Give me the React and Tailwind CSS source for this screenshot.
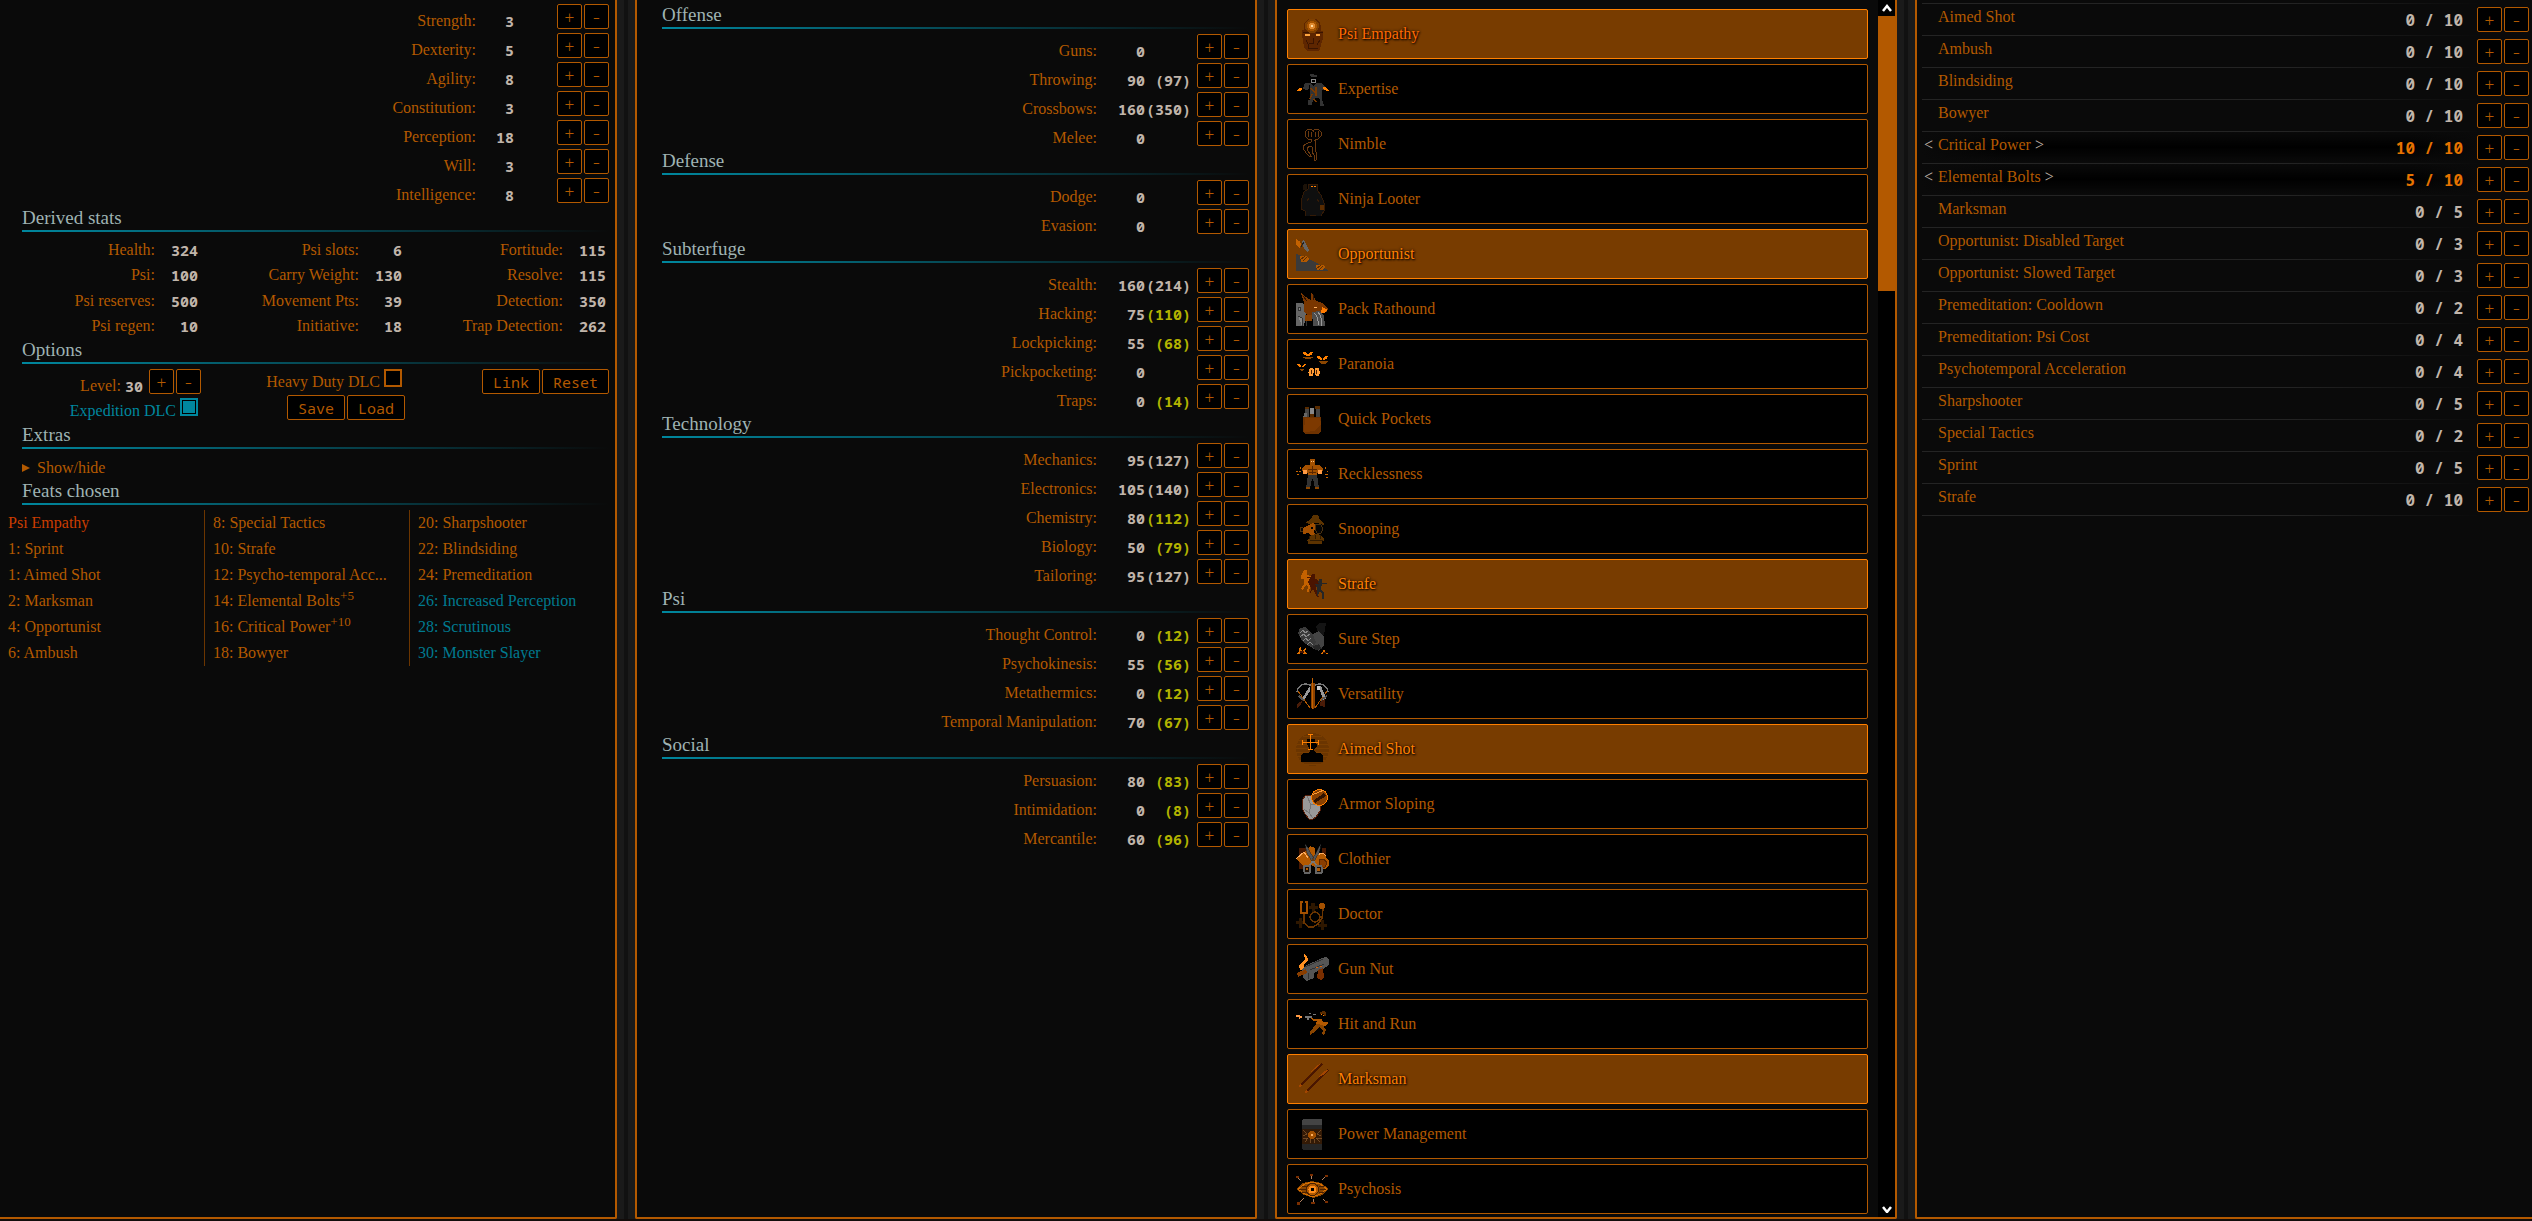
import React, { useState } from 'react';
import { clsx } from 'clsx';

const STATS = [
    ['Strength', 3],
    ['Dexterity', 5],
    ['Agility', 8],
    ['Constitution', 3],
    ['Perception', 18],
    ['Will', 3],
    ['Intelligence', 8],
];

const DERIVED = [
    ['Health', 324], ['Psi slots', 6], ['Fortitude', 115],
    ['Psi', 100], ['Carry Weight', 130], ['Resolve', 115],
    ['Psi reserves', 500], ['Movement Pts', 39], ['Detection', 350],
    ['Psi regen', 10], ['Initiative', 18], ['Trap Detection', 262],
];

// [label, base, effective, has synergy]
const SKILLS = {
    Offense: [['Guns', 0], ['Throwing', 90, 97], ['Crossbows', 160, 350], ['Melee', 0]],
    Defense: [['Dodge', 0], ['Evasion', 0]],
    Subterfuge: [
        ['Stealth', 160, 214],
        ['Hacking', 75, 110, true],
        ['Lockpicking', 55, 68, true],
        ['Pickpocketing', 0],
        ['Traps', 0, 14, true],
    ],
    Technology: [
        ['Mechanics', 95, 127],
        ['Electronics', 105, 140],
        ['Chemistry', 80, 112, true],
        ['Biology', 50, 79, true],
        ['Tailoring', 95, 127],
    ],
    Psi: [
        ['Thought Control', 0, 12, true],
        ['Psychokinesis', 55, 56, true],
        ['Metathermics', 0, 12, true],
        ['Temporal Manipulation', 70, 67, true],
    ],
    Social: [['Persuasion', 80, 83, true], ['Intimidation', 0, 8, true], ['Mercantile', 60, 96, true]],
};

const CHOSEN = [
    [
        { text: 'Psi Empathy', tone: 'psi' },
        { text: '1: Sprint' },
        { text: '1: Aimed Shot' },
        { text: '2: Marksman' },
        { text: '4: Opportunist' },
        { text: '6: Ambush' },
    ],
    [
        { text: '8: Special Tactics' },
        { text: '10: Strafe' },
        { text: '12: Psycho-temporal Acc...' },
        { text: '14: Elemental Bolts', bonus: '+5' },
        { text: '16: Critical Power', bonus: '+10' },
        { text: '18: Bowyer' },
    ],
    [
        { text: '20: Sharpshooter' },
        { text: '22: Blindsiding' },
        { text: '24: Premeditation' },
        { text: '26: Increased Perception', tone: 'veteran' },
        { text: '28: Scrutinous', tone: 'veteran' },
        { text: '30: Monster Slayer', tone: 'veteran' },
    ],
];

const SPECIALIZATIONS = [
    ['Aimed Shot', 0, 10],
    ['Ambush', 0, 10],
    ['Blindsiding', 0, 10],
    ['Bowyer', 0, 10],
    ['Critical Power', 10, 10],
    ['Elemental Bolts', 5, 10],
    ['Marksman', 0, 5],
    ['Opportunist: Disabled Target', 0, 3],
    ['Opportunist: Slowed Target', 0, 3],
    ['Premeditation: Cooldown', 0, 2],
    ['Premeditation: Psi Cost', 0, 4],
    ['Psychotemporal Acceleration', 0, 4],
    ['Sharpshooter', 0, 5],
    ['Special Tactics', 0, 2],
    ['Sprint', 0, 5],
    ['Strafe', 0, 10],
];

// Feat art, drawn on a 33x33 pixel canvas
const ART = {
    'Psi Empathy': (
        <>
            <path d="M12 1h8l4 4 1 4v4h2v8l-2 6-1 5-3 1h-10l-3-3-1-8-1-4v-6h2V6l2-3z" fill="#5e2600" />
            <circle cx="16" cy="8" r="7" fill="#804000" />
            <circle cx="16" cy="8" r="5" fill="#a85400" />
            <circle cx="16" cy="8" r="3" fill="#e08a30" />
            <rect x="15" y="7" width="2" height="2" fill="#ffd9a0" />
            <path d="M9 16h5v2H9zM20 16h4v2h-4z" fill="#ffa640" />
            <path d="M7 14h6M20 14h7M17 20v5h-4M10 22l2 4v5M24 22l-3 5M12 30h10" stroke="#3a1400" fill="none" />
        </>
    ),
    Expertise: (
        <>
            <path d="M14 1h4v1h3v2h-6zM9 10h5l3 3 3-3h5l4 3 1 3-4 1v9l2 7h-4v-7l-3-1-4 1-1 6h-4l1-9V16l-2 1-4-1z" fill="#333" />
            <path d="M15 6h5v4h-5z" fill="#888" />
            <path d="M16 7h3v2h-3zM13 12h1v15h-1z" fill="#000" />
            <path d="M0 18l3-3h3v2l-3 1zM27 14h3l3 4h-2l-3-1z" fill="#ff8000" />
            <path d="M15 15l4 5M20 14v9M16 21l-2 5M18 26l2 3" stroke="#7a3a00" strokeWidth="1.5" />
        </>
    ),
    Nimble: (
        <g fill="none" stroke="#6b3a10">
            <path d="M12 1h3l2 2 2-2h3l3 3v4l-3 3h-3M12 1L9 4v4l3 3h3M15 4v5M19 4v5M12 3v6M22 3v6M17 3v1" />
            <path d="M15 11v3l-3 1-5 3v2l3 5 3 3h2l-4-7 2-3 3 1v5l2 3v5l1 2 1-2v-8l-1-5 1-7h-2" />
        </g>
    ),
    'Ninja Looter': (
        <>
            <path d="M12 1h9v6l4 5 3 8v8l-3 5h-5l-2-1-4 1H9V28l-4-2V18l3-9 4-3z" fill="#0f0f0f" stroke="#331a06" />
            <path d="M8 1h3v6H7V3z" fill="#1c1208" />
            <path d="M11 18l2-3M23 19l-2-3" stroke="#331a06" />
            <path d="M15 3h2v1h-2zM18 3h2v1h-2z" fill="#ff8000" />
            <path d="M24 22h4v5h-4z" fill="#5a2c00" />
        </>
    ),
    Opportunist: (
        <>
            <path d="M0 16l7 2 14 7 12 8H0z" fill="#3a3a3a" />
            <path d="M0 1l2 2 1-1 2 4-1 4-4-3z" fill="#c46200" />
            <path d="M6 3l2-1 5 10-2 2-3-3z" fill="#666" />
            <path d="M5 9l3-5" stroke="#222" />
            <path d="M4 18h7l2 3-3 3H5zM20 27h7l2 2-3 3h-5z" fill="#b35900" />
            <path d="M4 22l5-4M7 23l4-4M20 31l5-4M23 32l4-4" stroke="#5a2c00" />
        </>
    ),
    'Pack Rathound': (
        <>
            <path d="M0 10h7l3 4v7l-2 12H0z" fill="#666" />
            <path d="M2 14h2v3H2zM2 23l4 2v8M10 22v11" stroke="#333" fill="#888" />
            <path d="M5 0l5 4 5 3V0l3 3 1 4 7 3 6 5-1 4-4-1-6 4-7 3-6-6V9z" fill="#7a3600" />
            <path d="M7 3l4 5M17 2v5" stroke="#2e1200" />
            <path d="M26 14l6 3-4 3h-3z" fill="#ff7b00" />
            <path d="M18 14h3v1h-3z" fill="#ffb060" />
            <path d="M16 19l8-1 4 5 1 10h-12z" fill="#4d4d4d" />
            <path d="M18 20q5 4 4 13M22 19q4 4 4 14" stroke="#999" fill="none" />
            <path d="M9 22h7v6H9z" fill="#8a4100" />
        </>
    ),
    Paranoia: (
        <g fill="#ff8000">
            <path d="M7 4h2l3 2v2h-2V7H8zM17 4h-2l-3 2v2h2V7h2zM21 8h2l3 2v2h-2v-1h-2zM32 8h-2l-3 2v2h2v-1h2zM1 16h2l2 2v1H3zM10 16H8l-2 2v1h2z" />
            <path d="M7 9h10v1h-2v1H9v-1H7zM22 13h10l-3 3h-4zM4 21h4v1H7v1H5v-1H4z" fill="#8a4500" />
            <path d="M14 20h3l1 2-1 6h-4v-2l-1-1zM19 20h4l1 5-1 3h-3l-1-3z" fill="#ff9a33" />
            <path d="M15 22h1v4h-1zM20 22h1v4h-1z" fill="#4a2000" />
        </g>
    ),
    'Quick Pockets': (
        <>
            <path d="M9 5h4v12H9zM20 4h4v12h-4z" fill="#444" />
            <path d="M14 5h4v6h-4z" fill="#888" />
            <path d="M8 10h3v6H7z" fill="#666" />
            <path d="M9 4h4v2H9zM19 3h5v3h-5zM14 11h4v4h-4z" fill="#5a2c00" />
            <path d="M7 14h18v14l-2 3H9l-2-3z" fill="#6e3200" />
            <path d="M9 15h15l1 6-6 7-11 1z" fill="#7d3900" />
        </>
    ),
    Recklessness: (
        <>
            <path d="M14 1h5v6h-5zM9 7h15l3 4-1 4-4-2-1 4h-9l-1-4-4 2-1-4z" fill="#a35000" />
            <path d="M12 11l4 1 5-1M13 14h7M16 8v8" stroke="#5a2600" fill="none" />
            <path d="M15 3h1v1h-1zM17 3h1v1h-1z" fill="#ffc080" />
            <path d="M12 17h9l2 13h-4l-2-9h-1l-2 9h-4z" fill="#333" />
            <path d="M10 29h4v2h-4zM19 29h4v2h-4z" fill="#8a4500" />
            <circle cx="9" cy="14" r="2.5" fill="#ff9a44" />
            <circle cx="24" cy="14" r="2.5" fill="#ff9a44" />
            <path d="M0 13h2M1 17l2-1M4 9v2M3 13h2M31 13h1M29 16h3M30 19h2M29 9l1 2" stroke="#c86400" />
        </>
    ),
    Snooping: (
        <>
            <path d="M17 2h5l2 5 4 3v2l-7-2-6 1-6-1 6-4z" fill="#5c3300" />
            <path d="M11 13l6-3 4 4-3 4 1 3-4 2-2-3-6 1V15z" fill="#a34f00" />
            <path d="M15 22l5-1 5 1 3 4v2h-2v3H12v-3h-1z" fill="#5c3300" />
            <path d="M15 14h2v2h-2z" fill="#000" />
            <path d="M20 11l5 1 2 4-2 4h-4l-2-4zM7 14l-3 1v3l3 1" stroke="#4a3010" fill="#050505" />
            <path d="M14 27h13M14 23l-1 3M19 22v4M24 22l1 4" stroke="#2e1900" />
        </>
    ),
    Strafe: (
        <>
            <path d="M8 2h3v5l4 1v2l-2 2 1 6-1 6h-2l1-5-2-2-3 5-2-1 3-5V11H5V8z" fill="#c46200" />
            <path d="M16 6h3v5l3 1v4l-2 4 3 9h-2l-4-8-3 5 1-6-3-6z" fill="#4a1400" />
            <path d="M23 11h3v4h5v1h-5l-1 5 3 4v6h-2v-5l-2-3-3 6v-9l-2-4h3z" fill="#262626" />
            <path d="M11 9h6M17 15h6" stroke="#4a1400" />
        </>
    ),
    'Sure Step': (
        <>
            <path d="M20 4l3-4h7l-2 12h-5z" fill="#141414" />
            <path d="M13 13l10-5 5 6v8l-5 6-7-3z" fill="#444" />
            <path d="M4 5l6-1 7 8 3 7-2 6-5-2-7-5-4-8z" fill="#3a3a3a" />
            <path d="M4 10l3-3 2 3 3-2M4 14l4-3 2 3 4-3M7 18l3-3 2 3 3-3M11 22l3-3 3 3" stroke="#8a8a8a" fill="none" />
            <path d="M16 24l7-3 3 5-6 1z" fill="#262626" />
            <path d="M0 31l3-3 1-5 2 5 4-3-1 4 2 2H8l-3-2-2 2zM24 31l3-2 1-4 1 4 4 2h-2l-3-1-2 1z" fill="#e07000" />
            <path d="M4 28h4v2H4zM27 29h3v1h-3z" fill="#4a1400" />
        </>
    ),
    Versatility: (
        <>
            <path d="M1 14q1-7 8-8l6 1M18 7l6-1q7 1 8 8" stroke="#777" fill="none" strokeWidth="1.5" />
            <path d="M2 13l12 17M31 13L19 30" stroke="#b35900" />
            <path d="M14 8v5L8 22l-1-3zM22 8h3l5 12-2 3z" fill="#999" />
            <path d="M21 8h3v4h-3z" fill="#ccc" />
            <path d="M3 18l5 5M25 22l6-4" stroke="#555" strokeWidth="1.5" />
            <path d="M7 22l-3 6-3 2v-4zM24 24l5-3v8l-5-1z" fill="#4a1c08" />
            <path d="M15 5h4v24l-2 3-2-3z" fill="#8a4100" />
            <path d="M16 0h1v31h-1z" fill="#c46200" />
        </>
    ),
    'Aimed Shot': (
        <>
            <circle cx="16.5" cy="16.5" r="16.5" fill="#6b3500" />
            <path d="M7 3h19M3 7h27M1 11h31M0 15h33M0 19h33M1 23h31M4 27h25M8 31h17" stroke="#7a3e00" />
            <path d="M11 6h8v4l2 1v3l-2 1-1 3 3 2h3l3 2v7H5v-7l3-2h4l2-2-1-3-2-4z" fill="#000" />
            <path d="M14 1h1v16h-1zM7 9h16v1H7zM12 1h5v1h-5zM12 16h5v1h-5zM6 7h1v5H6zM22 7h1v5h-1z" fill="#ff8000" />
        </>
    ),
    'Armor Sloping': (
        <>
            <path d="M10 7h8l6 8v8l-4 6-3 2h-4l-4-5-3-6 1-9z" fill="#999" stroke="#5a200a" />
            <path d="M11 8l4 9-2 8 4 5M15 17l8-1M13 25l-5-4" stroke="#777" fill="none" />
            <circle cx="23.5" cy="9.5" r="8" fill="#8a4100" stroke="#ff8000" />
            <path d="M17 13l11-8 2 3-11 7z" fill="#2e1200" />
            <path d="M16 7l7-3 5-2" stroke="#ff9a33" fill="none" />
        </>
    ),
    Clothier: (
        <>
            <path d="M3 5h10v21H3zM26 5h4v13h-4z" fill="#4a1800" />
            <path d="M0 16l8-7 6-6 5 2v8l8-3 6 8v4l-4 4-8-1-6-3-6 2z" fill="#b35900" />
            <path d="M0 16l8-7 4 6M20 12l7-2 3 3" stroke="#ffae60" fill="none" />
            <path d="M23 17l5-1 3 4-2 4h-4l-2-4z" fill="#8a3e00" stroke="#5a2600" />
            <path d="M9 1l3 4 6 11-1 4-6-10zM25 1l-3 5-6 11 1 3 6-10z" fill="#555" stroke="#222" strokeWidth="0.5" />
            <path d="M17 18l-4 5M17 18l4 5" stroke="#777" strokeWidth="2" />
            <path d="M9 23h5v6l-1 1H9l-1-2v-4zM20 23h5l1 2v4l-1 1h-5z" fill="#1a0c00" stroke="#666" strokeWidth="2" />
            <path d="M10 25h2v2h-2zM21 25h3v3h-3z" fill="#b35900" />
        </>
    ),
    Doctor: (
        <>
            <path d="M15 5h4v3h3v3h-3v3h-3v-3h-3V8h2zM3 20h3v3h3v3H6v4H3v-4H0v-3h3zM25 22h3v4h3v3h-3v3h-3v-3h-3v-3h3z" fill="#2e1700" />
            <path d="M4 4h3M12 4H9M5 4v11h6V4" stroke="#a35000" fill="none" strokeWidth="2" />
            <path d="M8 16v9l5 4h4l5-3 4-6 1-9" stroke="#6b3500" fill="none" strokeWidth="1.5" />
            <circle cx="19" cy="19" r="5" fill="none" stroke="#6b3500" strokeWidth="1.5" />
            <circle cx="26" cy="8" r="3" fill="#a35000" />
        </>
    ),
    'Gun Nut': (
        <>
            <path d="M8 1l3 2 1 4-4 4v6H4l-1-4 2-3 4-3z" fill="#ff9020" />
            <path d="M6 16l3-3 17-8 4-1 3 2v6l-6 4-9 4v5l-7 3-4-3z" fill="#555" />
            <path d="M9 14l18-8M14 17l14-6M12 20v6" stroke="#333" />
            <path d="M1 20l9-4 1 4-9 4z" fill="#8a3e00" />
            <path d="M22 17l5-2 1 9-3 3-4-2z" fill="#7a2e00" />
            <path d="M20 14h2v1h-2zM24 13h2v1h-2z" fill="#e06000" />
        </>
    ),
    'Hit and Run': (
        <>
            <path d="M0 7h3V6l1 2 3 1-3 1-1 2V9H0z" fill="#ff9a44" />
            <path d="M9 8h7v2h-3v2h-2v-2H9zM13 5h2v1h-2zM17 6h3v1h-3z" fill="#777" />
            <path d="M24 4l4-1 2 2v3h-2V6h-4z" fill="#5a2c00" />
            <path d="M25 6h1v1h-1zM27 7h1v1h-1z" fill="#ff8000" />
            <path d="M15 10l4 1h7l1 3h5v1l-3 3h-2l-2-1-5-1 1-3h-4z" fill="#b35900" />
            <path d="M20 16l7 1 3 5-2 5-2-1 1-4-4-3-4 5-5 3v-3z" fill="#8a4500" />
        </>
    ),
    Marksman: (
        <>
            <path d="M5 22L26 1M11 28L32 7" stroke="#4a1600" strokeWidth="1.5" />
            <path d="M15 9l6-7 3-1-5 5zM23 14l5-6 4-1-5 5z" fill="#a34600" />
            <path d="M3 24l1-3 2 2zM9 30l1-3 2 2z" fill="#a34600" />
        </>
    ),
    'Power Management': (
        <>
            <path d="M7 1h18l1 1v29l-1 1H7l-1-1V2z" fill="#262626" />
            <path d="M7 1h18l1 1v5H6V2z" fill="#444" />
            <path d="M6 11h20v15H6z" fill="#331a06" />
            <circle cx="16" cy="17" r="4" fill="#a35000" />
            <path d="M15 16h2v2h-2z" fill="#ffb060" />
            <path d="M7 12l4 4-4 2M9 24l3-4-5 1M25 12l-4 4 4 2M24 24l-4-4 6 1M14 25v-4M19 25l-1-4" stroke="#8a5c30" fill="none" strokeWidth="0.7" />
        </>
    ),
    Psychosis: (
        <>
            <path d="M0 16l7-6 9-2 9 2 8 6-7 6-9 3-9-3z" fill="#8a4500" />
            <path d="M2 16l7-5 7-2 8 2 7 5-7 5-7 3-8-3z" fill="none" stroke="#d97000" />
            <path d="M3 16h7M24 16h6M6 13h5M6 19h5M23 13h5M23 19h5" stroke="#4a2000" />
            <circle cx="16.5" cy="16.5" r="6" fill="#b35900" stroke="#4a2000" />
            <circle cx="16.5" cy="16.5" r="4" fill="#ff8c1a" />
            <path d="M15 15h3v3h-3z" fill="#000" />
            <path d="M1 4l4 4M15 1v5M31 2l-5 5M2 31l6-6M17 31v-5M31 30l-4-4" stroke="#b08060" />
            <path d="M0 3h3v2H0zM14 1h3v2h-3zM29 2h3v2h-3zM1 29h3v3H1zM15 29h4v2h-4zM29 28h3v2h-3z" fill="#7a2e00" />
        </>
    ),
};

const FEATS = Object.keys(ART);
const SELECTED = ['Psi Empathy', 'Opportunist', 'Strafe', 'Aimed Shot', 'Marksman'];

function Heading({ children }) {
    return (
        <h3 className="ml-[25px] mb-[5px] h-[25px] leading-[22px] text-[19px] text-[#9fb3b3] bg-[linear-gradient(to_right,#00879e,transparent)] bg-[length:100%_2px] bg-bottom bg-no-repeat">
            {children}
        </h3>
    );
}

function Button({ children, className, ...rest }) {
    return (
        <button
            type="button"
            className={clsx(
                "h-[25px] rounded-xs border border-[#b35900] bg-black leading-[20px] font-['Noto_Sans_Mono','DejaVu_Sans_Mono',monospace] text-[#b35900] hover:border-[#ff8000]",
                className
            )}
            {...rest}
        >
            {children}
        </button>
    );
}

function Stepper({ name }) {
    return (
        <div className="flex gap-[2px]">
            <Button className="w-[25px] text-lg font-light" aria-label={`Increase ${name}`}>+</Button>
            <Button className="w-[25px] text-lg font-light" aria-label={`Decrease ${name}`}>-</Button>
        </div>
    );
}

function Num({ children, className }) {
    return (
        <span className={clsx("text-right font-bold text-[15px] font-['Noto_Sans_Mono','DejaVu_Sans_Mono',monospace]", className)}>
            {children}
        </span>
    );
}

function Check({ label, checked, onChange }) {
    return (
        <label className={clsx('flex items-end justify-end gap-1', checked && 'text-[#00879e]')}>
            {label}
            <input
                type="checkbox"
                checked={checked}
                onChange={onChange}
                className="mb-1 size-[18px] appearance-none border-2 border-[#b35900] bg-black checked:border-[#00879e] checked:bg-[#00879e] checked:shadow-[inset_0_0_0_1px_#000]"
            />
        </label>
    );
}

function Panel({ children, className }) {
    return (
        <section className={clsx('rounded-b-xs border-x-2 border-b-2 border-[#b35900] bg-[#0a0a0a]', className)}>
            {children}
        </section>
    );
}

function Gutter() {
    return <div className="border-x-[7px] border-[#1a1a1a] bg-[#111]" />;
}

function Overview() {
    const [expedition, setExpedition] = useState(true);
    const [heavyDuty, setHeavyDuty] = useState(false);

    return (
        <Panel>
            <div className="pt-1 pr-[6px]">
                {STATS.map(([name, value]) => (
                    <div key={name} className="flex h-[29px]">
                        <span className="flex-1 pt-2 text-right">{name}:</span>
                        <Num className="w-[38px] pt-2 mr-[43px] text-[#c0b5aa]">{value}</Num>
                        <Stepper name={name} />
                    </div>
                ))}

                <Heading>Derived stats</Heading>
                <div className="grid h-[102px] grid-cols-3 grid-rows-4">
                    {DERIVED.map(([name, value]) => (
                        <div key={name} className="flex items-center justify-end pr-[3px]">
                            <span>{name}:</span>
                            <Num className="w-[43px] text-[#c0b5aa]">{value}</Num>
                        </div>
                    ))}
                </div>

                <Heading>Options</Heading>
                <div className="grid h-[55px] grid-cols-3">
                    <div>
                        <div className="flex h-[26px] justify-end">
                            <span className="pt-2 mr-1">Level:</span>
                            <Num className="pt-2 mr-[6px] text-[#c0b5aa]">30</Num>
                            <Stepper name="level" />
                        </div>
                        <div className="flex h-[25px] justify-end pr-[3px]">
                            <Check label="Expedition DLC" checked={expedition} onChange={() => setExpedition(!expedition)} />
                        </div>
                    </div>
                    <div>
                        <div className="flex h-[22px] mb-1 justify-end pr-[3px]">
                            <Check label="Heavy Duty DLC" checked={heavyDuty} onChange={() => setHeavyDuty(!heavyDuty)} />
                        </div>
                        <div className="flex justify-end gap-[2px]">
                            <Button className="px-[10px] text-[15px]">Save</Button>
                            <Button className="px-[10px] text-[15px]">Load</Button>
                        </div>
                    </div>
                    <div className="flex justify-end gap-[2px]">
                        <Button className="px-[10px] text-[15px]">Link</Button>
                        <Button className="px-[10px] text-[15px]">Reset</Button>
                    </div>
                </div>

                <Heading>Extras</Heading>
                <details className="ml-[25px] h-[26px]">
                    <summary className="flex cursor-pointer list-none items-center gap-[7px] pt-[5px]">
                        <svg viewBox="0 0 8 8" className="size-2" fill="#b35900">
                            <path d="M0 0l8 4-8 4z" />
                        </svg>
                        Show/hide
                    </summary>
                </details>

                <Heading>Feats chosen</Heading>
            </div>

            <div className="ml-[2px] mr-px grid grid-cols-3">
                {CHOSEN.map((column, i) => (
                    <ul key={i} className={clsx('border-l pl-2', i ? 'border-[#6b3500]' : 'border-transparent')}>
                        {column.map(({ text, bonus, tone }) => (
                            <li
                                key={text}
                                className={clsx(
                                    'flex h-[26px] items-center whitespace-nowrap',
                                    tone === 'psi' && 'text-[#cc3d00]',
                                    tone === 'veteran' && 'text-[#007a90]'
                                )}
                            >
                                {text}
                                {bonus && <span className="self-start text-[13px] leading-[15px]">{bonus}</span>}
                            </li>
                        ))}
                    </ul>
                ))}
            </div>
        </Panel>
    );
}

function Skills() {
    return (
        <Panel className="pt-1 pr-[6px]">
            {Object.entries(SKILLS).map(([group, skills]) => (
                <div key={group}>
                    <Heading>{group}</Heading>
                    {skills.map(([name, base, effective, synergy]) => (
                        <div key={name} className="flex h-[29px]">
                            <span className="flex-1 pt-2 text-right">{name}:</span>
                            <Num className="w-[48px] pt-2 text-[#c0b5aa]">{base}</Num>
                            <Num className={clsx('w-[46px] pt-2 mr-[6px]', synergy ? 'text-[#b3b300]' : 'text-[#c0b5aa]')}>
                                {effective && `(${effective})`}
                            </Num>
                            <Stepper name={name} />
                        </div>
                    ))}
                </div>
            ))}
        </Panel>
    );
}

function Feats() {
    return (
        <Panel className="flex overflow-hidden">
            <ul className="flex-1 flex flex-col gap-[5px] pt-[9px] px-[10px]">
                {FEATS.map(name => {
                    const selected = SELECTED.includes(name);
                    return (
                        <li key={name}>
                            <button
                                type="button"
                                aria-pressed={selected}
                                className={clsx(
                                    'flex h-[50px] w-full items-center gap-[9px] rounded-xs border px-2 text-left',
                                    selected
                                        ? 'border-[#ff8000] bg-[#783c00] [text-shadow:1px_1px_2px_#000,0_0_3px_#000]'
                                        : 'border-[#b35900] bg-black',
                                    selected && (name === 'Psi Empathy' ? 'text-[#ff6a00]' : 'text-[#ff8000]')
                                )}
                            >
                                <svg viewBox="0 0 33 33" className="size-[33px]" shapeRendering="crispEdges">
                                    {ART[name]}
                                </svg>
                                {name}
                            </button>
                        </li>
                    );
                })}
            </ul>
            <div className="flex w-[17px] flex-col justify-between bg-black">
                <div>
                    <ScrollArrow d="M1 7l4-5 4 5" />
                    <div className="h-[275px] bg-[#b35900]" />
                </div>
                <ScrollArrow d="M1 2l4 5 4-5" />
            </div>
        </Panel>
    );
}

function ScrollArrow({ d }) {
    return (
        <div className="flex h-4 items-center justify-center">
            <svg viewBox="0 0 10 8" className="h-2 w-[10px]" fill="none" stroke="#fff" strokeWidth="2.5">
                <path d={d} />
            </svg>
        </div>
    );
}

function Specializations() {
    return (
        <Panel className="pt-[3px] pl-[5px] pr-[6px]">
            {SPECIALIZATIONS.map(([name, points, max]) => (
                <div
                    key={name}
                    className={clsx(
                        'flex h-8 bg-no-repeat',
                        points > 0
                            ? 'bg-[linear-gradient(to_right,#242424_60%,transparent_92%),linear-gradient(to_right,#0a0a0a,transparent_15%,transparent_80%,#0a0a0a_92%),linear-gradient(transparent,#000_50%,transparent)] bg-[length:100%_1px,100%_100%,100%_100%]'
                            : 'bg-[linear-gradient(to_right,#242424_60%,transparent_92%)] bg-[length:100%_1px]'
                    )}
                >
                    <span className="flex-1 pt-[5px] whitespace-pre">
                        <span className="inline-block w-4 pl-[2px] text-[#c0b5aa]">{points > 0 && '<'}</span>
                        {name}
                        {points > 0 && <span className="text-[#c0b5aa]"> &gt;</span>}
                    </span>
                    <span
                        className={clsx(
                            "pt-2 mr-[14px] text-right font-bold text-base leading-[18px] whitespace-pre font-['Noto_Sans_Mono','DejaVu_Sans_Mono',monospace]",
                            points > 0 ? 'text-[#e67300]' : 'text-[#c0b5aa]'
                        )}
                    >
                        {points} / {max}
                    </span>
                    <div className="pt-1">
                        <Stepper name={name} />
                    </div>
                </div>
            ))}
            <div className="h-px bg-[linear-gradient(to_right,#242424_60%,transparent_92%)]" />
        </Panel>
    );
}

export default function App() {
    return (
        <div className="h-screen overflow-hidden bg-[#120c0a] pb-[2px] text-[16px] leading-[18px] text-[#b35900] font-['Liberation_Serif','Times_New_Roman',serif]">
            <main className="-mx-[5px] grid h-full grid-cols-[repeat(3,minmax(0,1fr)_18px)_minmax(0,1fr)]">
                <Overview />
                <Gutter />
                <Skills />
                <Gutter />
                <Feats />
                <Gutter />
                <Specializations />
            </main>
        </div>
    );
}
